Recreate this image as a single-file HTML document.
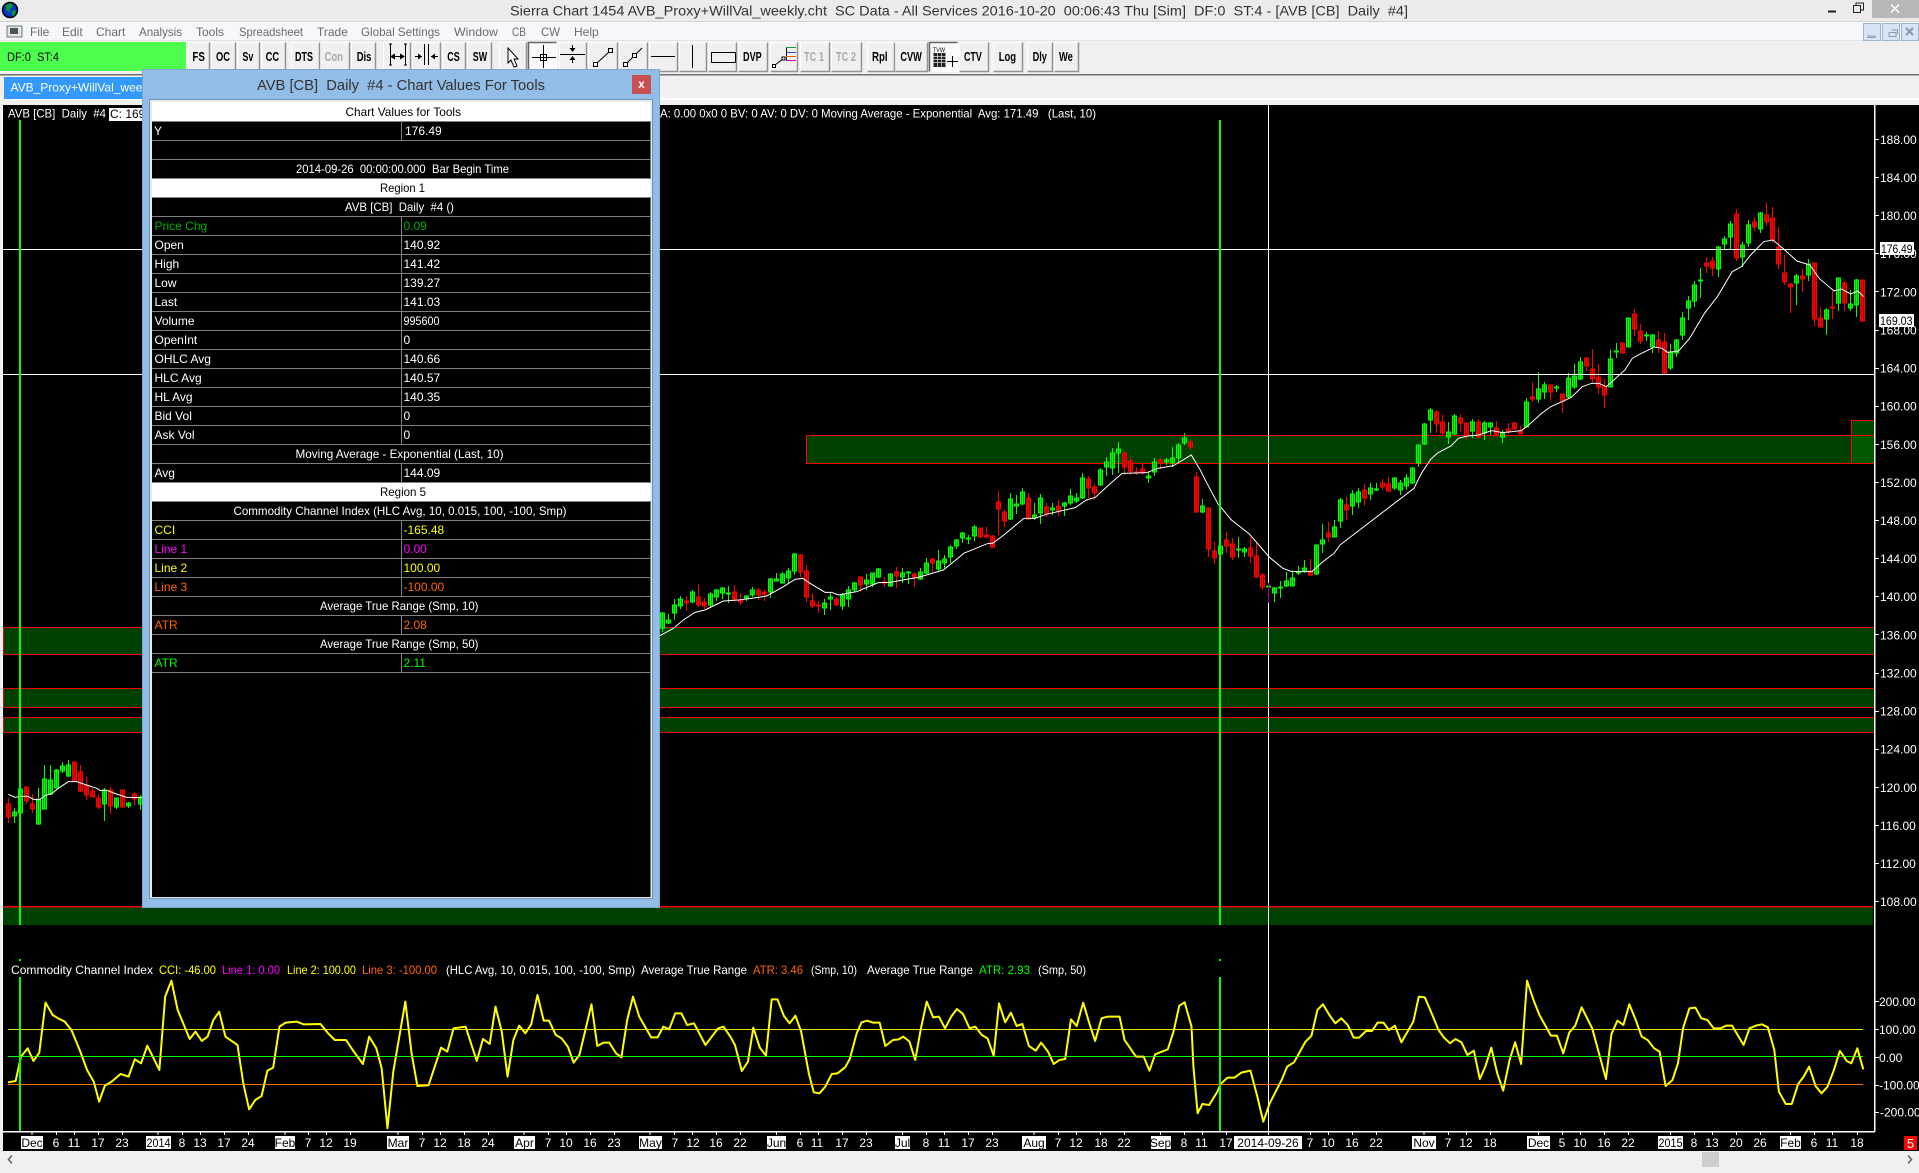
<!DOCTYPE html>
<html lang="en"><head><meta charset="utf-8"><title>Sierra Chart</title>
<style>
html,body{margin:0;padding:0;background:#000;overflow:hidden}
svg{display:block}
text{font-family:"Liberation Sans",sans-serif;font-size:12px;fill:#fff;white-space:pre}
.k{fill:#000}.m{text-anchor:middle}
.b{font-weight:bold;font-size:13px;fill:#000}
.d{font-weight:bold;font-size:13px;fill:#aaa}
.u{fill:#6a6a6a;font-size:12px}
.v{vector-effect:non-scaling-stroke;fill:none}
</style></head><body>
<svg xmlns="http://www.w3.org/2000/svg" width="1919" height="1173" viewBox="0 0 1919 1173">
<!-- chrome -->
<rect width="1919" height="22" fill="#ebebeb"/>
<rect y="21" width="1919" height="1" fill="#d4d4d4"/>
<rect y="22" width="1919" height="19" fill="#f5f7fa"/>
<rect y="40" width="1919" height="1" fill="#e6e6e6"/>
<rect y="41" width="1919" height="64" fill="#f0f0f0"/>
<rect y="74" width="1919" height="1.5" fill="#707070"/>
<rect y="98" width="1919" height="2" fill="#fff"/>
<!-- app icon -->
<circle cx="10" cy="10" r="7.5" fill="#0038c8" stroke="#000" stroke-width="1.5"/>
<path d="M6 5l5-2 2 3-3 3-1 3-3-2zM12 11l4-1-1 5-3 1z" fill="#0a9a2a"/>
<text x="510" y="15.5" style="font-size:14px;fill:#333" textLength="898" lengthAdjust="spacingAndGlyphs">Sierra Chart 1454 AVB_Proxy+WillVal_weekly.cht  SC Data - All Services 2016-10-20  00:06:43 Thu [Sim]  DF:0  ST:4 - [AVB [CB]  Daily  #4]</text>
<rect x="1828" y="10.5" width="8" height="2" fill="#222"/>
<path d="M1853.5 5.5h7v7h-7zM1856 5V3h7.5v7h-3" fill="none" stroke="#222"/>
<rect x="1872" y="0" width="47" height="18" fill="#b8b8b8"/>
<path d="M1891 4.5l8 8M1899 4.5l-8 8" stroke="#fff" stroke-width="1.5"/>
<!-- menu -->
<rect x="7" y="26" width="15" height="11" fill="#dfe6ea" stroke="#777"/><rect x="10" y="28" width="8" height="6" fill="#4a5560"/>
<text class="u" x="30" y="36">File</text>
<text class="u" x="62" y="36">Edit</text>
<text class="u" x="96" y="36">Chart</text>
<text class="u" x="139" y="36" textLength="43" lengthAdjust="spacingAndGlyphs">Analysis</text>
<text class="u" x="196" y="36">Tools</text>
<text class="u" x="239" y="36" textLength="64" lengthAdjust="spacingAndGlyphs">Spreadsheet</text>
<text class="u" x="317" y="36">Trade</text>
<text class="u" x="361" y="36" textLength="79" lengthAdjust="spacingAndGlyphs">Global Settings</text>
<text class="u" x="454" y="36" textLength="44" lengthAdjust="spacingAndGlyphs">Window</text>
<text class="u" x="512" y="36" textLength="14" lengthAdjust="spacingAndGlyphs">CB</text>
<text class="u" x="541" y="36" textLength="19" lengthAdjust="spacingAndGlyphs">CW</text>
<text class="u" x="574" y="36">Help</text>
<g fill="#d6e4f5" stroke="#9fb4cc"><rect x="1863.5" y="23.5" width="17" height="17"/><rect x="1882.5" y="23.5" width="17" height="17"/><rect x="1901.5" y="23.5" width="17" height="17"/></g>
<path d="M1868 36h7v1.5h-7zM1889 32.5h7v4h-7zM1891.5 30h6v4" fill="none" stroke="#8a9aac"/>
<path d="M1906 28l7 7M1913 28l-7 7" stroke="#8a9aac" stroke-width="2"/>
<!-- toolbar -->
<rect x="0" y="42" width="186" height="29" fill="#4cff4c"/>
<text class="k" x="7" y="61" textLength="52" lengthAdjust="spacingAndGlyphs">DF:0  ST:4</text>
<path fill="#f0f0f0" stroke="#fff" d="M188.5 42.5H209.5V71.5H188.5zM211.5 42.5H235.5V71.5H211.5zM237.5 42.5H259.5V71.5H237.5zM261.5 42.5H285.5V71.5H261.5zM291.5 42.5H319.5V71.5H291.5zM320.5 42.5H349.5V71.5H320.5zM351.5 42.5H375.5V71.5H351.5zM383.5 42.5H410.5V71.5H383.5zM412.5 42.5H440.5V71.5H412.5zM442.5 42.5H465.5V71.5H442.5zM467.5 42.5H491.5V71.5H467.5zM499.5 42.5H526.5V71.5H499.5zM559.5 42.5H586.5V71.5H559.5zM588.5 42.5H617.5V71.5H588.5zM619.5 42.5H647.5V71.5H619.5zM649.5 42.5H677.5V71.5H649.5zM679.5 42.5H706.5V71.5H679.5zM708.5 42.5H736.5V71.5H708.5zM738.5 42.5H767.5V71.5H738.5zM770.5 42.5H797.5V71.5H770.5zM800.5 42.5H829.5V71.5H800.5zM831.5 42.5H861.5V71.5H831.5zM867.5 42.5H894.5V71.5H867.5zM895.5 42.5H927.5V71.5H895.5zM959.5 42.5H988.5V71.5H959.5zM993.5 42.5H1022.5V71.5H993.5zM1027.5 42.5H1052.5V71.5H1027.5zM1054.5 42.5H1078.5V71.5H1054.5z"/>
<path fill="none" stroke="#929292" stroke-width="1.5" d="M209.5 42.5V71.5H188.5M235.5 42.5V71.5H211.5M259.5 42.5V71.5H237.5M285.5 42.5V71.5H261.5M319.5 42.5V71.5H291.5M349.5 42.5V71.5H320.5M375.5 42.5V71.5H351.5M410.5 42.5V71.5H383.5M440.5 42.5V71.5H412.5M465.5 42.5V71.5H442.5M491.5 42.5V71.5H467.5M526.5 42.5V71.5H499.5M586.5 42.5V71.5H559.5M617.5 42.5V71.5H588.5M647.5 42.5V71.5H619.5M677.5 42.5V71.5H649.5M706.5 42.5V71.5H679.5M736.5 42.5V71.5H708.5M767.5 42.5V71.5H738.5M797.5 42.5V71.5H770.5M829.5 42.5V71.5H800.5M861.5 42.5V71.5H831.5M894.5 42.5V71.5H867.5M927.5 42.5V71.5H895.5M988.5 42.5V71.5H959.5M1022.5 42.5V71.5H993.5M1052.5 42.5V71.5H1027.5M1078.5 42.5V71.5H1054.5"/>
<path fill="#fafafa" stroke="#fff" d="M528.5 42.5H556.5V71.5H528.5zM929.5 42.5H957.5V71.5H929.5z"/>
<path fill="none" stroke="#666" stroke-width="1.5" d="M528.5 71.5V42.5H556.5M929.5 71.5V42.5H957.5"/>
<text class="b" x="192.4" y="61" textLength="12.5" lengthAdjust="spacingAndGlyphs">FS</text>
<text class="b" x="216" y="61" textLength="14" lengthAdjust="spacingAndGlyphs">OC</text>
<text class="b" x="242.4" y="61" textLength="11" lengthAdjust="spacingAndGlyphs">Sv</text>
<text class="b" x="265.6" y="61" textLength="13.5" lengthAdjust="spacingAndGlyphs">CC</text>
<text class="b" x="295" y="61" textLength="18" lengthAdjust="spacingAndGlyphs">DTS</text>
<text class="d" x="324.5" y="61" textLength="18.5" lengthAdjust="spacingAndGlyphs">Con</text>
<text class="b" x="356.7" y="61" textLength="14.7" lengthAdjust="spacingAndGlyphs">Dis</text>
<text class="b" x="447.3" y="61" textLength="12.5" lengthAdjust="spacingAndGlyphs">CS</text>
<text class="b" x="472.8" y="61" textLength="14.3" lengthAdjust="spacingAndGlyphs">SW</text>
<text class="b" x="743" y="61" textLength="18.7" lengthAdjust="spacingAndGlyphs">DVP</text>
<text class="d" x="804" y="61" textLength="20" lengthAdjust="spacingAndGlyphs">TC 1</text>
<text class="d" x="836" y="61" textLength="20" lengthAdjust="spacingAndGlyphs">TC 2</text>
<text class="b" x="872" y="61" textLength="15.6" lengthAdjust="spacingAndGlyphs">Rpl</text>
<text class="b" x="900.4" y="61" textLength="21.4" lengthAdjust="spacingAndGlyphs">CVW</text>
<text class="b" x="964" y="61" textLength="17.8" lengthAdjust="spacingAndGlyphs">CTV</text>
<text class="b" x="998.7" y="61" textLength="17.4" lengthAdjust="spacingAndGlyphs">Log</text>
<text class="b" x="1032.6" y="61" textLength="14.3" lengthAdjust="spacingAndGlyphs">Dly</text>
<text class="b" x="1059" y="61" textLength="13.8" lengthAdjust="spacingAndGlyphs">We</text>
<!-- toolbar icons -->
<g fill="none" stroke="#000" shape-rendering="crispEdges">
<path d="M390.5 44V65M389 44h3M389 65h3M405.5 44V65M404 44h3M404 65h3M393 56.5h10"/>
<path d="M424.5 44V65M428.5 44V65M415 56.5h7M431 56.5h7"/>
<path d="M532 57.5h24M543.5 45V68"/><rect x="540.5" y="54.5" width="6" height="6"/>
<path d="M560 54.5h25M572.5 45V51M572.5 57V63"/>
<path d="M651 56.5h24M692.5 45V68"/><rect x="711.5" y="52.5" width="24" height="10"/>
<rect x="593.5" y="62.5" width="4" height="4"/><rect x="608.5" y="48.5" width="4" height="4"/>
<rect x="623.5" y="62.5" width="4" height="4"/><rect x="632.5" y="53.5" width="4" height="4"/>
<rect x="772.5" y="64.5" width="3" height="3"/>
<path d="M786.5 47V61"/>
</g>
<path d="M390 56.5l5-3v6zM405 56.5l-5-3v6zM422 56.5l-4-3v6zM431 56.5l4-3v6zM572.5 52l-3-4h6zM572.5 56l-3 4h6z" fill="#000"/>
<path d="M597 63L609 52M627 63l6-6M636 54l6-6M775 65l8-6" stroke="#000" fill="none"/>
<path d="M508 48V63l3-3 3 7 3-1-3-7h4z" fill="#fff" stroke="#000"/>
<path d="M786 47.5h10" stroke="#1a9a3a"/><path d="M786 52.5h10" stroke="#2050c0"/><path d="M786 56.5h10" stroke="#f06000"/><path d="M786 60.5h10" stroke="#c000c0"/>
<rect x="782" y="57" width="3" height="3" fill="#fff" stroke="#000"/>
<text x="933" y="52" style="font-size:6px;fill:#000" textLength="12" lengthAdjust="spacingAndGlyphs">TVW</text>
<path d="M933.5 53h12v14h-12z" fill="#222"/>
<path d="M933.5 56.5h12M933.5 59.5h12M933.5 62.5h12M937.5 53v14M941.5 53v14" stroke="#ddd" stroke-width=".7"/>
<path d="M947 61.5h11M952.5 56v11" stroke="#000"/>
<!-- tab -->
<rect x="3.5" y="76.5" width="150" height="23" fill="#3399ff" stroke="#fff"/>
<text x="10.5" y="91.5">AVB_Proxy+WillVal_weekly.cht</text>
<!-- chart -->
<rect x="0" y="100" width="3" height="1073" fill="#f0f0f0"/><rect x="2" y="105" width="1" height="1026" fill="#fff"/>
<rect x="3" y="105" width="1916" height="1046" fill="#000"/>
<g fill="#004000" stroke="#f00">
<rect x="806.5" y="435.5" width="1068" height="28"/>
<rect x="3.5" y="627.5" width="1871" height="27"/>
<rect x="3.5" y="688.5" width="1871" height="19"/>
<rect x="3.5" y="717.5" width="1871" height="15"/>
<rect x="1851.5" y="420.5" width="23" height="43" fill="#006000" fill-opacity=".75"/>
</g>
<path d="M1851 435.5h24" stroke="#f00"/>
<rect x="3" y="906" width="1870" height="19" fill="#004000"/><rect x="3" y="906" width="1870" height="1.5" fill="#f00"/>
<path d="M3 654.5h1872M3 732.5h1872" stroke="#f00"/>
<!-- candles -->
<path fill="#00b000" stroke="#00ff00" d="M14.5 808V823M12.5 812h4v4h-4zM20.5 788V813M18.5 789h4v24h-4zM38.5 788V825M36.5 800h4v24h-4zM44.5 765V809M42.5 779h4v30h-4zM50.5 765V795M48.5 780h4v14h-4zM56.5 769V788M54.5 770h4v18h-4zM62.5 762V773M60.5 766h4v5h-4zM68.5 760V777M66.5 765h4v11h-4zM104.5 788V821M102.5 790h4v14h-4zM116.5 798V809M114.5 798h4v9h-4zM128.5 802V808M126.5 803h4v3h-4zM140.5 795V810M138.5 797h4v7h-4z
M662.5 612V632M660.5 613h4v15h-4zM668.5 614V624M666.5 620h4v3h-4zM674.5 599V620M672.5 605h4v8h-4zM680.5 596V609M678.5 599h4v7h-4zM692.5 590V603M690.5 592h4v10h-4zM710.5 592V607M708.5 594h4v11h-4zM716.5 589V601M714.5 590h4v7h-4zM722.5 587V599M720.5 588h4v5h-4zM728.5 586V603M726.5 593h4v1h-4zM746.5 595V601M744.5 596h4v3h-4zM752.5 587V597M750.5 590h4v5h-4zM770.5 578V598M768.5 579h4v13h-4zM776.5 573V581M774.5 579h4v2h-4zM782.5 572V583M780.5 574h4v9h-4zM788.5 568V583M786.5 571h4v7h-4zM794.5 553V575M792.5 554h4v17h-4zM824.5 599V615M822.5 603h4v5h-4zM830.5 593V610M828.5 597h4v2h-4zM842.5 593V610M840.5 595h4v11h-4zM848.5 586V607M846.5 590h4v9h-4zM854.5 582V592M852.5 583h4v7h-4zM866.5 574V590M864.5 580h4v4h-4zM872.5 573V587M870.5 573h4v11h-4zM878.5 568V578M876.5 569h4v8h-4zM890.5 573V587M888.5 574h4v12h-4zM902.5 568V583M900.5 573h4v4h-4zM908.5 571V584M906.5 572h4v1h-4zM920.5 568V580M918.5 572h4v7h-4zM926.5 558V574M924.5 563h4v10h-4zM938.5 550V572M936.5 561h4v8h-4zM944.5 555V568M942.5 559h4v4h-4zM950.5 545V563M948.5 547h4v10h-4zM956.5 539V549M954.5 540h4v6h-4z
M962.5 532V543M960.5 533h4v5h-4zM968.5 535V544M966.5 538h4v1h-4zM974.5 525V541M972.5 527h4v9h-4zM1010.5 493V520M1008.5 499h4v20h-4zM1016.5 495V514M1014.5 504h4v2h-4zM1022.5 488V505M1020.5 492h4v12h-4zM1034.5 503V520M1032.5 515h4v3h-4zM1040.5 494V524M1038.5 498h4v15h-4zM1052.5 503V515M1050.5 508h4v2h-4zM1064.5 502V516M1062.5 503h4v3h-4zM1070.5 489V505M1068.5 496h4v7h-4zM1076.5 493V503M1074.5 498h4v3h-4zM1082.5 473V499M1080.5 478h4v20h-4zM1100.5 468V486M1098.5 470h4v15h-4zM1106.5 457V476M1104.5 462h4v5h-4zM1112.5 448V475M1110.5 453h4v15h-4zM1118.5 442V473M1116.5 449h4v4h-4zM1148.5 472V483M1146.5 476h4v2h-4zM1154.5 458V476M1152.5 462h4v10h-4zM1166.5 458V465M1164.5 460h4v2h-4zM1172.5 447V467M1170.5 458h4v5h-4zM1178.5 443V462M1176.5 445h4v13h-4zM1184.5 433V445M1182.5 438h4v5h-4zM1202.5 499V513M1200.5 506h4v6h-4zM1220.5 540V559M1218.5 546h4v8h-4zM1238.5 537V558M1236.5 549h4v1h-4zM1244.5 547V557M1242.5 549h4v3h-4zM1266.5 586h4v1h-4zM1274.5 587V602M1272.5 588h4v5h-4zM1280.5 581V598M1278.5 587h4v1h-4zM1286.5 572V587M1284.5 581h4v5h-4zM1292.5 570V586M1290.5 578h4v8h-4zM1298.5 566V575M1296.5 572h4v1h-4zM1304.5 560V573M1302.5 568h4v3h-4zM1316.5 545V575M1314.5 545h4v29h-4zM1322.5 524V553M1320.5 540h4v4h-4zM1334.5 520V537M1332.5 527h4v10h-4zM1340.5 498V528M1338.5 500h4v21h-4zM1352.5 490V515M1350.5 494h4v12h-4zM1358.5 488V508M1356.5 492h4v10h-4zM1370.5 483V500M1368.5 488h4v6h-4zM1376.5 483V491M1374.5 489h4v1h-4zM1394.5 477V490M1392.5 478h4v10h-4zM1400.5 480V495M1398.5 483h4v7h-4zM1406.5 474V490M1404.5 478h4v8h-4zM1412.5 467V484M1410.5 468h4v15h-4zM1418.5 445V467M1416.5 445h4v18h-4zM1424.5 423V445M1422.5 424h4v20h-4zM1430.5 408V433M1428.5 410h4v10h-4zM1448.5 422V444M1446.5 432h4v5h-4zM1454.5 414V435M1452.5 416h4v18h-4zM1472.5 419V438M1470.5 422h4v9h-4zM1484.5 421V440M1482.5 423h4v10h-4zM1490.5 422V435M1488.5 423h4v4h-4zM1502.5 430V443M1500.5 433h4v4h-4zM1526.5 398V427M1524.5 402h4v25h-4zM1538.5 372V403M1536.5 389h4v10h-4zM1544.5 382V399M1542.5 385h4v7h-4zM1556.5 385V392M1554.5 387h4v1h-4zM1568.5 373V398M1566.5 378h4v19h-4zM1574.5 364V389M1572.5 376h4v11h-4zM1580.5 357V380M1578.5 362h4v17h-4zM1610.5 350V387M1608.5 359h4v28h-4zM1616.5 343V358M1614.5 351h4v1h-4zM1628.5 318V347M1626.5 318h4v29h-4zM1646.5 332V341M1644.5 335h4v1h-4zM1652.5 334V353M1650.5 335h4v12h-4zM1670.5 344V370M1668.5 352h4v16h-4zM1676.5 339V357M1674.5 340h4v13h-4zM1682.5 312V340M1680.5 318h4v17h-4zM1688.5 296V320M1686.5 301h4v7h-4zM1694.5 281V307M1692.5 285h4v16h-4zM1700.5 268V298M1698.5 280h4v1h-4zM1718.5 246V277M1716.5 247h4v22h-4zM1724.5 236V249M1722.5 239h4v5h-4zM1730.5 221V249M1728.5 224h4v13h-4zM1742.5 242V267M1740.5 245h4v12h-4zM1748.5 220V247M1746.5 225h4v18h-4zM1760.5 212V233M1758.5 213h4v16h-4zM1796.5 274V305M1794.5 276h4v7h-4zM1808.5 259V281M1806.5 264h4v11h-4zM1826.5 308V335M1824.5 310h4v9h-4zM1838.5 278V311M1836.5 278h4v25h-4zM1850.5 290V311M1848.5 304h4v4h-4zM1856.5 279V317M1854.5 280h4v25h-4z"/>
<path fill="#b00000" stroke="#ff0000" d="M8.5 798V823M6.5 804h4v13h-4zM26.5 787V804M24.5 787h4v14h-4zM32.5 794V813M30.5 804h4v5h-4zM74.5 762V782M72.5 762h4v19h-4zM80.5 765V792M78.5 772h4v19h-4zM86.5 777V800M84.5 785h4v10h-4zM92.5 788V797M90.5 791h4v6h-4zM98.5 794V809M96.5 798h4v9h-4zM110.5 787V814M108.5 790h4v16h-4zM122.5 789V807M120.5 790h4v17h-4zM134.5 792V805M132.5 794h4v5h-4z
M686.5 596V611M684.5 601h4v2h-4zM698.5 584V607M696.5 597h4v8h-4zM704.5 598V609M702.5 602h4v4h-4zM734.5 585V602M732.5 592h4v7h-4zM740.5 593V605M738.5 600h4v2h-4zM758.5 588V600M756.5 590h4v5h-4zM764.5 590V601M762.5 592h4v2h-4zM800.5 554V577M798.5 555h4v17h-4zM806.5 565V602M804.5 571h4v26h-4zM812.5 594V608M810.5 601h4v5h-4zM818.5 601V613M816.5 605h4v1h-4zM836.5 597V606M834.5 599h4v6h-4zM860.5 577V592M858.5 577h4v8h-4zM884.5 577V587M882.5 582h4v1h-4zM896.5 567V588M894.5 572h4v4h-4zM914.5 572V587M912.5 574h4v3h-4zM932.5 558V572M930.5 559h4v4h-4zM980.5 528V538M978.5 528h4v9h-4zM986.5 527V537M984.5 535h4v2h-4zM992.5 535V548M990.5 536h4v11h-4zM998.5 491V535M996.5 502h4v7h-4zM1004.5 510V527M1002.5 512h4v9h-4zM1028.5 493V520M1026.5 498h4v21h-4zM1046.5 503V517M1044.5 507h4v6h-4zM1058.5 500V516M1056.5 506h4v5h-4zM1088.5 476V498M1086.5 479h4v9h-4zM1094.5 484V500M1092.5 487h4v6h-4zM1124.5 452V475M1122.5 453h4v14h-4zM1130.5 457V475M1128.5 461h4v10h-4zM1136.5 467V475M1134.5 472h4v1h-4zM1142.5 464V475M1140.5 469h4v3h-4zM1160.5 458V469M1158.5 460h4v3h-4zM1190.5 440V450M1188.5 442h4v5h-4zM1196.5 472V513M1194.5 477h4v35h-4zM1208.5 508V557M1206.5 508h4v41h-4zM1214.5 542V564M1212.5 551h4v7h-4zM1226.5 532V553M1224.5 540h4v6h-4zM1232.5 538V560M1230.5 544h4v13h-4zM1250.5 537V563M1248.5 548h4v8h-4zM1256.5 543V578M1254.5 556h4v21h-4zM1262.5 573V590M1260.5 575h4v12h-4zM1310.5 559V576M1308.5 571h4v4h-4zM1328.5 522V542M1326.5 533h4v4h-4zM1346.5 497V520M1344.5 505h4v5h-4zM1364.5 484V506M1362.5 490h4v8h-4zM1382.5 479V490M1380.5 483h4v4h-4zM1388.5 477V492M1386.5 484h4v7h-4zM1436.5 410V433M1434.5 412h4v12h-4zM1442.5 415V435M1440.5 422h4v11h-4zM1460.5 414V432M1458.5 418h4v5h-4zM1466.5 423V440M1464.5 423h4v13h-4zM1478.5 419V438M1476.5 422h4v15h-4zM1496.5 421V437M1494.5 428h4v8h-4zM1508.5 423V434M1506.5 429h4v3h-4zM1514.5 422V430M1512.5 423h4v6h-4zM1520.5 426V434M1518.5 431h4v3h-4zM1532.5 382V402M1530.5 397h4v2h-4zM1550.5 385V401M1548.5 385h4v7h-4zM1562.5 394V413M1560.5 394h4v7h-4zM1586.5 357V371M1584.5 358h4v8h-4zM1592.5 349V383M1590.5 369h4v10h-4zM1598.5 364V394M1596.5 377h4v10h-4zM1604.5 379V408M1602.5 386h4v9h-4zM1622.5 343V353M1620.5 343h4v10h-4zM1634.5 309V336M1632.5 314h4v15h-4zM1640.5 324V344M1638.5 331h4v10h-4zM1658.5 331V353M1656.5 340h4v7h-4zM1664.5 333V374M1662.5 342h4v32h-4zM1706.5 257V273M1704.5 263h4v3h-4zM1712.5 257V276M1710.5 261h4v7h-4zM1736.5 209V261M1734.5 214h4v44h-4zM1754.5 217V231M1752.5 222h4v5h-4zM1766.5 203V226M1764.5 215h4v7h-4zM1772.5 207V243M1770.5 218h4v22h-4zM1778.5 227V269M1776.5 247h4v17h-4zM1784.5 255V285M1782.5 273h4v9h-4zM1790.5 283V313M1788.5 284h4v3h-4zM1802.5 269V292M1800.5 276h4v3h-4zM1814.5 263V326M1812.5 263h4v56h-4zM1820.5 307V327M1818.5 318h4v9h-4zM1832.5 291V319M1830.5 307h4v1h-4zM1844.5 281V311M1842.5 283h4v20h-4zM1862.5 280V322M1860.5 280h4v41h-4z"/>
<!-- moving average -->
<g stroke="#fff" stroke-width="1">
<polyline class="v" transform="translate(0,610) scale(.3333)" points="25,553 45,562 60,559 85,559 100,568 120,568 135,557 155,551 175,535 205,515 230,515 260,525 290,535 300,541 320,541 350,552 380,562 425,563"/>
<polyline class="v" transform="translate(660,540) scale(.3333)" points="0,287 40,265 70,240 105,217 135,210 190,183 235,180 290,173 320,168 370,140 405,118 428,115 450,130 495,157 515,157 535,165 590,155 655,128 690,127 745,117 775,112 850,90 900,50 912,39"/>
<polyline class="v" transform="translate(640,420) scale(.4464,.3333)" points="725,400 780,370 790,370 815,345 860,295 885,295 910,283 975,263 1000,240 1020,232 1050,195 1080,160 1135,158 1160,145 1195,137 1235,105 1255,150 1270,190 1295,252 1325,300 1365,342 1410,412 1440,445 1460,455 1505,455 1530,425 1555,400 1568,375"/>
<polyline class="v" transform="translate(1340,190) scale(.37,.3333)" points="0,1065 200,895 220,850 245,808 265,788 300,768 320,745 345,738 375,735 410,722 440,728 490,722 510,705 545,670 570,650 600,635 625,622 655,590 680,580 700,580 720,590 770,540 790,505 815,490 850,471 870,475 885,487 915,483 945,445 985,370 1020,320 1060,245 1085,230 1110,195 1145,155 1170,150 1200,178 1235,213 1270,225 1295,265 1335,303 1355,297 1380,312 1400,303 1415,320"/>
</g>
<!-- crosshair / markers -->
<path d="M3 249.5H1875M3 374.5H1875M1268.5 105V1131" stroke="#fff" fill="none"/>
<path d="M1268.5 583V603" stroke="#a000a0"/>
<!-- CCI -->
<path d="M8 1029.5H1863" stroke="#e6e600"/>
<path d="M8 1056.5H1863" stroke="#00ff00"/>
<path d="M8 1084.5H1863" stroke="#ff7000"/>
<g stroke="#ff0" stroke-width="2" stroke-linejoin="round">
<polyline class="v" transform="translate(0,880) scale(.4464,.3333)" points="18,607 35,603 47,530 62,505 75,543 88,518 102,368 118,405 130,415 145,425 160,450 180,515 195,570 210,605 222,665 235,617 250,605 270,582 288,590 302,538 316,550 330,497 357,570 370,350 384,302 398,390 425,477 438,455 452,483 465,470 478,420 491,395 505,470 532,495 545,610 558,688 572,660 586,648 599,572 612,563 626,440 640,428 665,425 680,433 718,432 735,460 750,480 775,480 790,510 813,552 827,470 843,505 855,565 868,745 881,575 908,365 922,520 935,618 960,616 988,503 1002,515 1016,445 1043,440 1068,543 1082,477 1097,492 1110,380 1124,455 1137,590 1150,480 1163,437 1177,460 1190,433 1204,345 1218,422 1230,422 1245,465 1258,475 1272,500 1285,548 1298,525 1325,373 1338,498 1352,488 1365,488 1380,520 1392,532 1405,420 1418,350 1432,410 1460,475"/>
<polyline class="v" transform="translate(650,960) scale(.3827,.3333)" points="5,232 20,232 35,200 50,208 66,160 82,160 97,195 115,190 145,255 178,205 192,200 210,230 222,255 240,333 256,305 270,203 287,263 303,287 318,118 333,118 350,168 365,190 380,167 395,215 415,340 428,397 443,400 458,380 475,342 490,340 510,322 522,297 540,220 553,187 568,182 583,188 600,188 615,258 635,240 650,238 662,230 678,245 693,300 708,205 723,125 740,172 755,170 771,205 787,170 802,147 818,162 835,205 850,200 867,225 882,235 898,287 912,130 928,187 943,158 958,198 973,192 990,258 1008,272 1022,248 1040,275 1055,312 1070,300 1085,297 1100,178 1115,198 1132,128 1148,190 1163,243 1180,175 1195,170 1227,170 1240,240 1270,290 1290,290 1305,332 1320,283 1353,268 1368,215 1383,137 1397,127 1415,200 1420,320 1431,460 1437,445"/>
<polyline class="v" transform="translate(1200,880) scale(.4587,.3333)" points="0,688 5,672 20,675 38,635 45,612 60,593 75,593 90,578 110,572 125,650 138,725 152,670 178,600 190,560 205,547 230,485 243,467 256,390 268,373 282,405 295,430 308,415 322,435 335,473 347,473 362,453 375,453 387,428 400,428 412,450 425,437 439,487 465,425 477,350 490,352 505,400 520,450 532,473 545,490 557,477 570,487 583,525 597,512 610,597 622,560 635,503 648,580 661,632 675,540 687,487 700,552 713,302 727,360 740,405 765,467 778,467 792,520 805,458 818,437 832,382 855,445 885,597 897,462 910,422 923,435 936,373 950,420 963,470 976,480 990,505 1002,515 1015,618 1030,600 1042,550 1053,445 1067,385 1080,383 1093,415 1106,420 1120,445 1135,445 1147,437 1160,437 1185,495 1198,445 1212,437 1225,433 1238,442 1252,510 1262,635 1277,672 1290,672 1304,612 1316,590 1328,560 1342,618 1355,640 1368,620 1382,570 1395,513 1410,543 1420,550 1433,505 1446,568"/>
</g>
<!-- green verticals -->
<g fill="#00ff00">
<rect x="19" y="120" width="2" height="805"/><rect x="19" y="959" width="2" height="2"/><rect x="19" y="977" width="2" height="154"/>
<rect x="1219" y="120" width="2" height="805"/><rect x="1219" y="959" width="2" height="2"/><rect x="1219" y="977" width="2" height="154"/>
</g>
<!-- price scale -->
<rect x="1874" y="105" width="1.5" height="1027" fill="#fff"/>
<path stroke="#fff" d="M1875 139.5h4M1875 177.5h4M1875 215.5h4M1875 253.5h4M1875 291.5h4M1875 330.5h4M1875 368.5h4M1875 406.5h4M1875 444.5h4M1875 482.5h4M1875 520.5h4M1875 558.5h4M1875 596.5h4M1875 634.5h4M1875 673.5h4M1875 711.5h4M1875 749.5h4M1875 787.5h4M1875 825.5h4M1875 863.5h4M1875 901.5h4M1875 1001.5h4M1875 1029.5h4M1875 1057.5h4M1875 1085.5h4M1875 1112.5h4"/>
<g>
<text x="1880" y="144">188.00</text><text x="1880" y="182">184.00</text><text x="1880" y="220">180.00</text><text x="1880" y="258">176.00</text><text x="1880" y="296.4">172.00</text><text x="1880" y="334.5">168.00</text><text x="1880" y="372.6">164.00</text><text x="1880" y="410.7">160.00</text><text x="1880" y="448.9">156.00</text><text x="1880" y="487">152.00</text><text x="1880" y="525">148.00</text><text x="1880" y="563">144.00</text><text x="1880" y="601">140.00</text><text x="1880" y="639.4">136.00</text><text x="1880" y="677.5">132.00</text><text x="1880" y="715.6">128.00</text><text x="1880" y="753.7">124.00</text><text x="1880" y="791.8">120.00</text><text x="1880" y="829.9">116.00</text><text x="1880" y="868">112.00</text><text x="1880" y="906.2">108.00</text>
<text x="1879" y="1006.2">200.00</text><text x="1879" y="1034.2">100.00</text><text x="1879" y="1062.2">0.00</text><text x="1879" y="1089.5">-100.00</text><text x="1880" y="1116.5">-200.00</text>
</g>
<rect x="1880" y="242" width="34" height="13" fill="#fff"/><text class="k" x="1881" y="253" textLength="31.5" lengthAdjust="spacingAndGlyphs">176.49</text>
<rect x="1879" y="314" width="35" height="13" fill="#fff"/><text class="k" x="1880" y="325" textLength="32.5" lengthAdjust="spacingAndGlyphs">169.03</text>
<!-- top chart text -->
<text x="8" y="117.5" textLength="98" lengthAdjust="spacingAndGlyphs">AVB [CB]  Daily  #4</text>
<rect x="109" y="108" width="40" height="13" fill="#fff"/><text class="k" x="110" y="118">C: 169</text>
<text x="660" y="117.5" textLength="436" lengthAdjust="spacingAndGlyphs">A: 0.00 0x0 0 BV: 0 AV: 0 DV: 0 Moving Average - Exponential  Avg: 171.49   (Last, 10)</text>
<!-- CCI legend -->
<text x="11" y="974" textLength="142" lengthAdjust="spacingAndGlyphs">Commodity Channel Index</text>
<text x="159" y="974" textLength="57" style="fill:#ff0" lengthAdjust="spacingAndGlyphs">CCI: -46.00</text>
<text x="222" y="974" style="fill:#f0f" textLength="58" lengthAdjust="spacingAndGlyphs">Line 1: 0.00</text>
<text x="287" y="974" style="fill:#ff0" textLength="69" lengthAdjust="spacingAndGlyphs">Line 2: 100.00</text>
<text x="362" y="974" style="fill:#f60" textLength="75" lengthAdjust="spacingAndGlyphs">Line 3: -100.00</text>
<text x="446" y="974" textLength="189" lengthAdjust="spacingAndGlyphs">(HLC Avg, 10, 0.015, 100, -100, Smp)</text>
<text x="641" y="974" textLength="106" lengthAdjust="spacingAndGlyphs">Average True Range</text>
<text x="753" y="974" style="fill:#f60" textLength="50" lengthAdjust="spacingAndGlyphs">ATR: 3.46</text>
<text x="811" y="974" textLength="46" lengthAdjust="spacingAndGlyphs">(Smp, 10)</text>
<text x="867" y="974" textLength="106" lengthAdjust="spacingAndGlyphs">Average True Range</text>
<text x="979" y="974" style="fill:#0f0" textLength="51" lengthAdjust="spacingAndGlyphs">ATR: 2.93</text>
<text x="1038" y="974" textLength="48" lengthAdjust="spacingAndGlyphs">(Smp, 50)</text>
<!-- date axis -->
<rect x="3" y="1131" width="1872" height="1.5" fill="#fff"/>
<path stroke="#fff" d="M32 1131v4M56.5 1131v4M74.5 1131v4M98.5 1131v4M122.5 1131v4M158 1131v4M182.5 1131v4M200.5 1131v4M224.5 1131v4M248.5 1131v4M285 1131v4M308.5 1131v4M326.5 1131v4M350.5 1131v4M398 1131v4M422.5 1131v4M440.5 1131v4M464.5 1131v4M488.5 1131v4M524 1131v4M548.5 1131v4M566.5 1131v4M590.5 1131v4M614.5 1131v4M650 1131v4M674.5 1131v4M692.5 1131v4M716.5 1131v4M740.5 1131v4M776.5 1131v4M800.5 1131v4M818.5 1131v4M842.5 1131v4M866.5 1131v4M902.5 1131v4M926.5 1131v4M944.5 1131v4M968.5 1131v4M992.5 1131v4M1034 1131v4M1058.5 1131v4M1076.5 1131v4M1100.5 1131v4M1124.5 1131v4M1160.5 1131v4M1184.5 1131v4M1202.5 1131v4M1226.5 1131v4M1268.5 1131v4M1310.5 1131v4M1328.5 1131v4M1352.5 1131v4M1376.5 1131v4M1424 1131v4M1448.5 1131v4M1466.5 1131v4M1490.5 1131v4M1538.5 1131v4M1562.5 1131v4M1580.5 1131v4M1604.5 1131v4M1628.5 1131v4M1670.5 1131v4M1694.5 1131v4M1712.5 1131v4M1736.5 1131v4M1760.5 1131v4M1790.5 1131v4M1814.5 1131v4M1832.5 1131v4M1857.5 1131v4"/>
<g fill="#fff">
<rect x="21" y="1136" width="22" height="13"/><rect x="146" y="1136" width="25" height="13"/><rect x="275" y="1136" width="20" height="13"/><rect x="387" y="1136" width="22" height="13"/><rect x="514" y="1136" width="21" height="13"/><rect x="639" y="1136" width="23" height="13"/><rect x="767" y="1136" width="19" height="13"/><rect x="895" y="1136" width="15" height="13"/><rect x="1022" y="1136" width="24" height="13"/><rect x="1151" y="1136" width="20" height="13"/><rect x="1234" y="1136" width="68" height="13"/><rect x="1412" y="1136" width="24" height="13"/><rect x="1527" y="1136" width="23" height="13"/><rect x="1658" y="1136" width="25" height="13"/><rect x="1780" y="1136" width="21" height="13"/>
</g>
<g>
<text class="k m" x="32" y="1147">Dec</text><text class="m" x="56" y="1147">6</text><text class="m" x="74" y="1147">11</text><text class="m" x="98" y="1147">17</text><text class="m" x="122" y="1147">23</text>
<text class="k m" x="158.5" y="1147" textLength="24" lengthAdjust="spacingAndGlyphs">2014</text><text class="m" x="182" y="1147">8</text><text class="m" x="200" y="1147">13</text><text class="m" x="224" y="1147">17</text><text class="m" x="248" y="1147">24</text>
<text class="k m" x="285" y="1147">Feb</text><text class="m" x="308" y="1147">7</text><text class="m" x="326" y="1147">12</text><text class="m" x="350" y="1147">19</text>
<text class="k m" x="398" y="1147">Mar</text><text class="m" x="422" y="1147">7</text><text class="m" x="440" y="1147">12</text><text class="m" x="464" y="1147">18</text><text class="m" x="488" y="1147">24</text>
<text class="k m" x="524.5" y="1147">Apr</text><text class="m" x="548" y="1147">7</text><text class="m" x="566" y="1147">10</text><text class="m" x="590" y="1147">16</text><text class="m" x="614" y="1147">23</text>
<text class="k m" x="650.5" y="1147">May</text><text class="m" x="675" y="1147">7</text><text class="m" x="693" y="1147">12</text><text class="m" x="716" y="1147">16</text><text class="m" x="740" y="1147">22</text>
<text class="k m" x="776.5" y="1147">Jun</text><text class="m" x="800" y="1147">6</text><text class="m" x="817" y="1147">11</text><text class="m" x="842" y="1147">17</text><text class="m" x="866" y="1147">23</text>
<text class="k m" x="902.5" y="1147">Jul</text><text class="m" x="926" y="1147">8</text><text class="m" x="944" y="1147">11</text><text class="m" x="968" y="1147">17</text><text class="m" x="992" y="1147">23</text>
<text class="k m" x="1034" y="1147">Aug</text><text class="m" x="1058" y="1147">7</text><text class="m" x="1076" y="1147">12</text><text class="m" x="1101" y="1147">18</text><text class="m" x="1124" y="1147">22</text>
<text class="k m" x="1160.5" y="1147">Sep</text><text class="m" x="1184" y="1147">8</text><text class="m" x="1201.5" y="1147">11</text><text class="m" x="1226" y="1147">17</text>
<text class="k m" x="1268" y="1147">2014-09-26</text><text class="m" x="1310" y="1147">7</text><text class="m" x="1328" y="1147">10</text><text class="m" x="1352" y="1147">16</text><text class="m" x="1376" y="1147">22</text>
<text class="k m" x="1424" y="1147">Nov</text><text class="m" x="1448" y="1147">7</text><text class="m" x="1466" y="1147">12</text><text class="m" x="1490" y="1147">18</text>
<text class="k m" x="1538.5" y="1147">Dec</text><text class="m" x="1562" y="1147">5</text><text class="m" x="1580" y="1147">10</text><text class="m" x="1604" y="1147">16</text><text class="m" x="1628" y="1147">22</text>
<text class="k m" x="1670.5" y="1147" textLength="24" lengthAdjust="spacingAndGlyphs">2015</text><text class="m" x="1694" y="1147">8</text><text class="m" x="1712" y="1147">13</text><text class="m" x="1736" y="1147">20</text><text class="m" x="1760" y="1147">26</text>
<text class="k m" x="1790.5" y="1147">Feb</text><text class="m" x="1814" y="1147">6</text><text class="m" x="1832" y="1147">11</text><text class="m" x="1857" y="1147">18</text>
</g>
<rect x="1904" y="1136" width="13" height="14" fill="#f00"/><text class="m" x="1910.5" y="1148" style="font-size:13px">5</text>
<!-- scrollbar -->
<rect x="0" y="1151" width="1919" height="22" fill="#f0f0f0"/>
<rect x="1702" y="1152" width="17" height="15" fill="#cdcdcd"/>
<path d="M12 1155.5l-3.5 4 3.5 4M1908 1155.5l3.5 4-3.5 4" fill="none" stroke="#666" stroke-width="1.6"/>
<!-- dialog -->
<rect x="142.5" y="69.5" width="517" height="838" fill="#91bde6" stroke="#7ba7d0"/>
<text x="257" y="90" style="font-size:15px;fill:#333" textLength="288" lengthAdjust="spacingAndGlyphs">AVB [CB]  Daily  #4 - Chart Values For Tools</text>
<rect x="632" y="75" width="19" height="19" fill="#c75050"/>
<text class="m" x="641.5" y="88" style="font-weight:bold;font-size:12px">x</text>
<rect x="149.5" y="99.5" width="503" height="799" fill="#e8e8e8" stroke="#6f92b4"/>
<rect x="152" y="102" width="498.5" height="795" fill="#000"/>
<g fill="#fff">
<rect x="152" y="102" width="498.5" height="19"/><rect x="152" y="178" width="498.5" height="19"/><rect x="152" y="482" width="498.5" height="19"/>
</g>
<path stroke="#808080" fill="none" d="M152 121.5h499M152 140.5h499M152 159.5h499M152 178.5h499M152 197.5h499M152 216.5h499M152 235.5h499M152 254.5h499M152 273.5h499M152 292.5h499M152 311.5h499M152 330.5h499M152 349.5h499M152 368.5h499M152 387.5h499M152 406.5h499M152 425.5h499M152 444.5h499M152 463.5h499M152 482.5h499M152 501.5h499M152 520.5h499M152 539.5h499M152 558.5h499M152 577.5h499M152 596.5h499M152 615.5h499M152 634.5h499M152 653.5h499M152 672.5h499M401.5 121V140M401.5 216V444M401.5 463V482M401.5 520V596M401.5 615V634M401.5 653V672"/>
<text class="k" x="345.5" y="116" textLength="115.5" lengthAdjust="spacingAndGlyphs">Chart Values for Tools</text>
<text x="154" y="135">Y</text><text x="405" y="135">176.49</text>
<text x="296" y="173" textLength="213" lengthAdjust="spacingAndGlyphs">2014-09-26  00:00:00.000  Bar Begin Time</text>
<text class="k" x="380" y="192" textLength="45" lengthAdjust="spacingAndGlyphs">Region 1</text>
<text x="345" y="211" textLength="109" lengthAdjust="spacingAndGlyphs">AVB [CB]  Daily  #4 ()</text>
<text x="154.5" y="230" style="fill:#00b000">Price Chg</text><text x="403.5" y="230" style="fill:#00b000">0.09</text>
<text x="154.5" y="249">Open</text><text x="403.5" y="249">140.92</text>
<text x="154.5" y="268">High</text><text x="403.5" y="268">141.42</text>
<text x="154.5" y="287">Low</text><text x="403.5" y="287">139.27</text>
<text x="154.5" y="306">Last</text><text x="403.5" y="306">141.03</text>
<text x="154.5" y="325">Volume</text><text x="403.5" y="325" textLength="36" lengthAdjust="spacingAndGlyphs">995600</text>
<text x="154.5" y="344">OpenInt</text><text x="403.5" y="344">0</text>
<text x="154.5" y="363">OHLC Avg</text><text x="403.5" y="363">140.66</text>
<text x="154.5" y="382">HLC Avg</text><text x="403.5" y="382">140.57</text>
<text x="154.5" y="401">HL Avg</text><text x="403.5" y="401">140.35</text>
<text x="154.5" y="420">Bid Vol</text><text x="403.5" y="420">0</text>
<text x="154.5" y="439">Ask Vol</text><text x="403.5" y="439">0</text>
<text x="295.5" y="458" textLength="208" lengthAdjust="spacingAndGlyphs">Moving Average - Exponential (Last, 10)</text>
<text x="154.5" y="477">Avg</text><text x="403.5" y="477">144.09</text>
<text class="k" x="380" y="496" textLength="46" lengthAdjust="spacingAndGlyphs">Region 5</text>
<text x="233.5" y="515" textLength="333" lengthAdjust="spacingAndGlyphs">Commodity Channel Index (HLC Avg, 10, 0.015, 100, -100, Smp)</text>
<text x="154.5" y="534" style="fill:#ff0">CCI</text><text x="403.5" y="534" style="fill:#ff0">-165.48</text>
<text x="154.5" y="553" style="fill:#f0f">Line 1</text><text x="403.5" y="553" style="fill:#f0f">0.00</text>
<text x="154.5" y="572" style="fill:#ff0">Line 2</text><text x="403.5" y="572" style="fill:#ff0">100.00</text>
<text x="154.5" y="591" style="fill:#f60">Line 3</text><text x="403.5" y="591" style="fill:#f60">-100.00</text>
<text x="320" y="610" textLength="158.5" lengthAdjust="spacingAndGlyphs">Average True Range (Smp, 10)</text>
<text x="154.5" y="629" style="fill:#f60">ATR</text><text x="403.5" y="629" style="fill:#f60">2.08</text>
<text x="320" y="648" textLength="158.5" lengthAdjust="spacingAndGlyphs">Average True Range (Smp, 50)</text>
<text x="154.5" y="667" style="fill:#0f0">ATR</text><text x="403.5" y="667" style="fill:#0f0">2.11</text>
</svg>
</body></html>
